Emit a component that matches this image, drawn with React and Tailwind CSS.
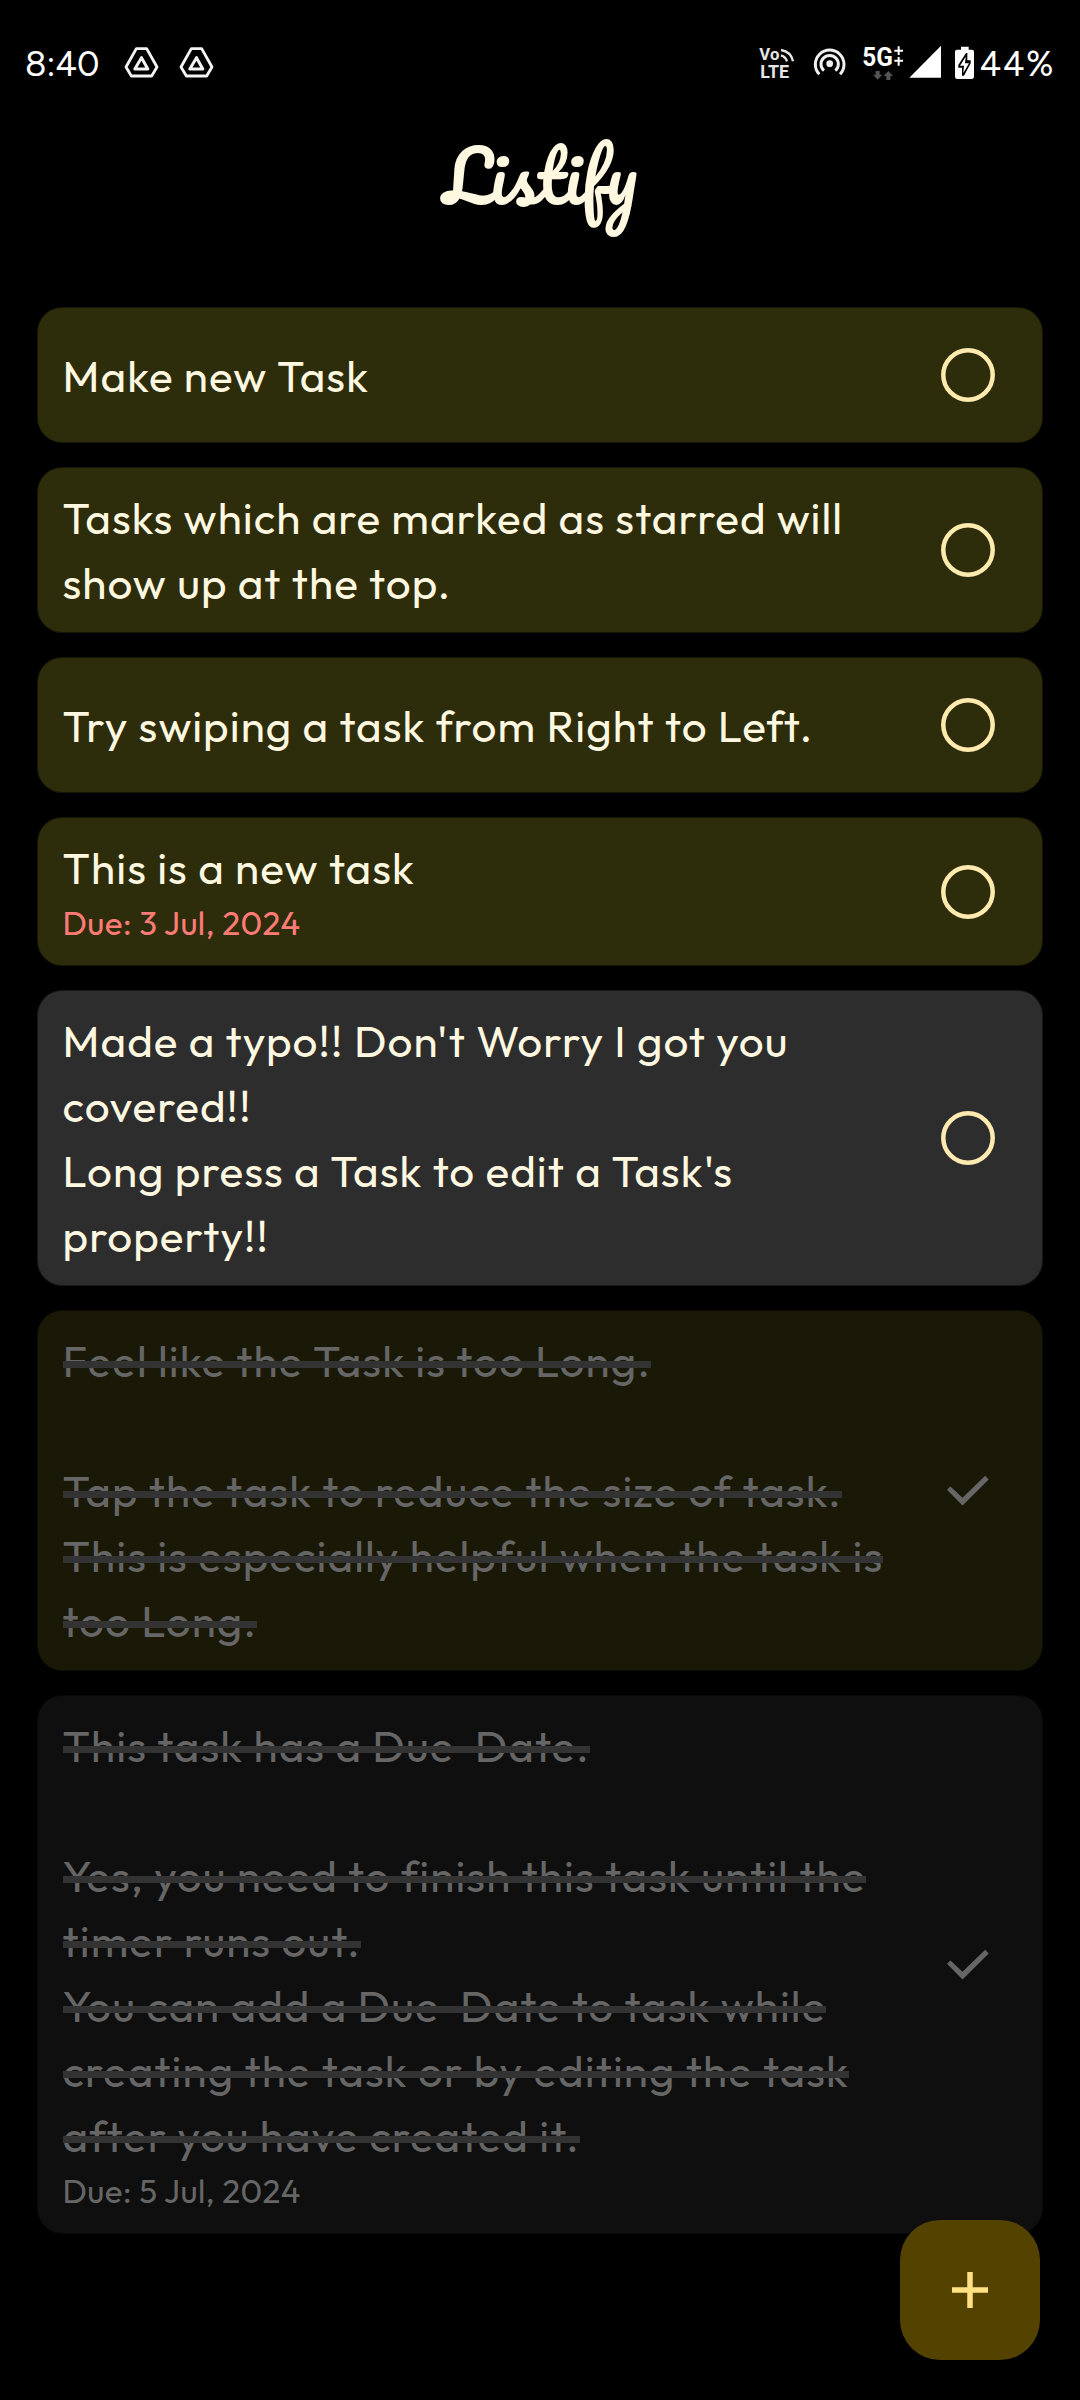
import React from 'react';

const TASKS = [
  { starred: true, lines: ['Make new Task'] },
  { starred: true, lines: ['Tasks which are marked as starred will', 'show up at the top.'] },
  { starred: true, lines: ['Try swiping a task from Right to Left.'] },
  { starred: true, lines: ['This is a new task'], due: 'Due: 3 Jul, 2024' },
  {
    lines: ["Made a typo!! Don't Worry I got you", 'covered!!', "Long press a Task to edit a Task's", 'property!!'],
  },
  {
    starred: true,
    done: true,
    lines: [
      'Feel like the Task is too Long.',
      '',
      'Tap the task to reduce the size of task.',
      'This is especially helpful when the task is',
      'too Long.',
    ],
  },
  {
    done: true,
    lines: [
      'This task has a Due  Date.',
      '',
      'Yes, you need to finish this task until the',
      'timer runs out.',
      'You can add a Due  Date to task while',
      'creating the task or by editing the task',
      'after you have created it.',
    ],
    due: 'Due: 5 Jul, 2024',
  },
];

function DriveIcon() {
  return (
    <svg className="h-[70px] w-[55px]" viewBox="360 0 165 210" fill="none" stroke="#f4f4f4" strokeWidth="8.500" strokeLinejoin="round">
      <path d="M409 56h31l31 55-16 27h-61l-16-27z" />
      <path d="M424.500 83l19 34h-39z" strokeWidth="9" />
    </svg>
  );
}

function VolteIcon() {
  return (
    <svg className="h-[70px] w-[40px]" viewBox="50 0 120 210" fill="#e6e6e6">
      <text x="57" y="90" fontSize="48" fontWeight="700" textLength="60" lengthAdjust="spacingAndGlyphs" className="font-['Roboto',sans-serif]">Vo</text>
      <text x="60" y="143" fontSize="54" fontWeight="700" textLength="86" lengthAdjust="spacingAndGlyphs" className="font-['Roboto',sans-serif]">LTE</text>
      <path d="M122 76q14 4 18 18M122 60q30 5 36 34" fill="none" stroke="#e6e6e6" strokeWidth="7" />
    </svg>
  );
}

function HotspotIcon() {
  return (
    <svg className="h-[70px] w-[48px]" viewBox="200 0 144 210" fill="none" stroke="#f0f0f0" strokeWidth="9">
      <circle cx="268" cy="101" r="10" fill="#f0f0f0" stroke="none" />
      <path d="M251 122a26 26 0 1 1 34 0" />
      <path d="M237 133a43 43 0 1 1 62 0" />
    </svg>
  );
}

function NetworkIcon() {
  return (
    <svg className="h-[70px] w-[85px]" viewBox="360 0 255 210" fill="#fff">
      <text x="367" y="107" fontSize="80" fontWeight="700" textLength="92" lengthAdjust="spacingAndGlyphs" className="font-['Roboto',sans-serif]">5G</text>
      <path d="M463 62h26M476 49v26M463 92h26M476 81v26" stroke="#fff" strokeWidth="6" />
      <path d="M407 123h12v11h8l-14 15-14-15h8z" fill="#555" />
      <path d="M439 150h12v-12h8l-14-15-14 15h8z" fill="#555" />
      <path d="M603 47v96h-95z" />
    </svg>
  );
}

function BatteryIcon() {
  return (
    <svg className="h-[70px] w-[23px]" viewBox="639 0 69 210">
      <path d="M663 50h23v9h10q6 0 6 6v74q0 8-7 8h-43q-7 0-7-8v-74q0-6 6-6h12z" fill="#fff" />
      <path d="M678 69l-23 36v8h11v24h6l20-37v-9h-10v-22z" fill="#000" />
      <path d="M677 80l-17 27h12l-2 22 17-29h-12z" fill="#fff" />
    </svg>
  );
}

function StatusBar() {
  return (
    <header className="flex h-[115px] items-start justify-between pt-[30px] pl-[25px] pr-[26px] text-[35px] leading-[68px] text-white font-['Figtree','Inter',sans-serif]">
      <div className="flex">
        <span className="w-[95px]">8:40</span>
        <DriveIcon />
        <DriveIcon />
      </div>
      <div className="flex">
        <VolteIcon />
        <span className="w-[10px]" />
        <HotspotIcon />
        <span className="w-[5px]" />
        <NetworkIcon />
        <span className="w-[8px]" />
        <BatteryIcon />
        <span className="w-[78px] pl-[3.500px] tracking-[1.500px]">44%</span>
      </div>
    </header>
  );
}

function StatusMark({ done }) {
  return (
    <svg className="size-[54px] shrink-0" viewBox="0 0 54 54" fill="none">
      {done ? (
        <path d="M44.200 11.800l3.500 3.700-26.200 26-15.500-15.700 3.400-3.300 12.100 11.300z" fill="#666" />
      ) : (
        <circle cx="27" cy="27" r="24.700" stroke="#ffeab0" strokeWidth="4.500" />
      )}
    </svg>
  );
}

function cardColors({ starred, done }) {
  if (starred) return done ? 'bg-[#1a1907] border-[#0d0d03]' : 'bg-[#2d2c0b] border-[#171606]';
  return done ? 'bg-[#0f0f0f] border-[#080808]' : 'bg-[#2d2d2d] border-[#171717]';
}

function TaskCard({ task }) {
  const { lines, due, done } = task;
  return (
    <li className={'flex items-center justify-between rounded-[25px] border py-[17px] pl-[24.500px] pr-[47px] min-h-[136px] ' + cardColors(task)}>
      <div>
        <div className={'text-[44px] leading-[65px] tracking-[1.060px] ' + (done ? 'text-[#666]' : 'text-[#fff8e1]')}>
          {lines.map((line, i) => (
            <div key={i} className="h-[65px] whitespace-pre">
              {done && line ? (
                <span className="relative inline-block after:absolute after:inset-x-0 after:top-[33px] after:h-[7px] after:bg-[#333]">{line}</span>
              ) : (
                line
              )}
            </div>
          ))}
        </div>
        {due && (
          <div className={'mb-[3px] pt-px text-[33px] leading-[44px] tracking-[0.370px] ' + (done ? 'text-[#666]' : 'text-[#ff7b76]')}>{due}</div>
        )}
      </div>
      <StatusMark done={done} />
    </li>
  );
}

export default function App() {
  return (
    <div className="relative h-[2400px] w-[1080px] overflow-hidden bg-black font-['Outfit','Lato',sans-serif]">
      <StatusBar />
      <h1 className="text-center text-[70px] leading-[122px] text-[#fff8e1] font-['Pacifico',cursive]">Listify</h1>
      <ul className="mx-[37px] mt-[70px] flex flex-col gap-6">
        {TASKS.map((task, i) => (
          <TaskCard key={i} task={task} />
        ))}
      </ul>
      <button className="absolute right-[40px] bottom-[40px] flex size-[140px] items-center justify-center rounded-[40px] bg-[#544300]" aria-label="Add task">
        <svg className="size-[36px]" viewBox="0 0 36 36">
          <path d="M18 0v36M0 18h36" stroke="#ffe082" strokeWidth="5.500" />
        </svg>
      </button>
    </div>
  );
}
